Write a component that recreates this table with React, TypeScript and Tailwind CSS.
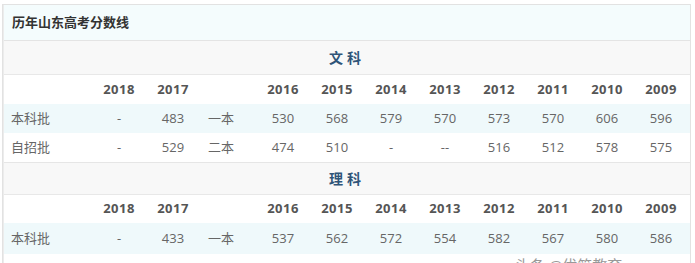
import React from 'react';

type Row = { label: string; values: string[]; batch: string };

const years = ['2018', '2017', '', '2016', '2015', '2014', '2013', '2012', '2011', '2010', '2009'];

const wenRows: Row[] = [
  { label: '本科批', batch: '一本', values: ['-', '483', '530', '568', '579', '570', '573', '570', '606', '596'] },
  { label: '自招批', batch: '二本', values: ['-', '529', '474', '510', '-', '--', '516', '512', '578', '575'] },
];

const liRows: Row[] = [
  { label: '本科批', batch: '一本', values: ['-', '433', '537', '562', '572', '554', '582', '567', '580', '586'] },
];

const cols = 'grid grid-cols-[88px_54px_54px_56px_54px_54px_54px_54px_54px_54px_54px_54px] items-center';

const YearRow: React.FC<{ h: string }> = ({ h }) => (
  <div className={`${cols} ${h} bg-white text-[13px] font-bold text-[#555] tracking-[0.5px]`}>
    <div />
    {years.map((y, i) => (
      <div key={i} className="text-center">{y}</div>
    ))}
  </div>
);

const DataRow: React.FC<{ row: Row; bg: string; h: string }> = ({ row, bg, h }) => (
  <div className={`${cols} ${h} ${bg} text-[13px] text-[#666]`}>
    <div className="pl-[7px]">{row.label}</div>
    <div className="text-center">{row.values[0]}</div>
    <div className="text-center">{row.values[1]}</div>
    <div className="pl-[8px]">{row.batch}</div>
    {row.values.slice(2).map((v, i) => (
      <div key={i} className="text-center">{v}</div>
    ))}
  </div>
);

const Section: React.FC<{ title: string; h: string }> = ({ title, h }) => (
  <div className={`flex ${h} items-center justify-center border-b border-[#e8e8e8] bg-[#f8f8f8] text-[14px] font-bold text-[#2f5478] tracking-[4px]`}>
    {title}
  </div>
);

export default function App() {
  return (
    <div
      className="relative h-[263px] w-[695px] overflow-hidden bg-white pl-[2px] pt-[4px]"
      style={{ fontFamily: '"Open Sans", "Noto Sans CJK SC", sans-serif' }}
    >
      <div className="w-[689px] border border-[#e2e2e2]">
        <div className="border-l border-[#ececec]">
          <div className="flex h-[36px] items-center border-b border-[#e4e4e4] bg-[#f4fcfd] pl-[8px] text-[13px] font-bold text-[#333]">
            历年山东高考分数线
          </div>
          <Section title="文科" h="h-[34px]" />
          <YearRow h="h-[29px]" />
          <DataRow row={wenRows[0]} bg="bg-[#eff9fb]" h="h-[29px]" />
          <DataRow row={wenRows[1]} bg="bg-white" h="h-[29px]" />
          <div className="border-t border-[#e6e6e6]" />
          <Section title="理科" h="h-[32px]" />
          <YearRow h="h-[28px]" />
          <DataRow row={liRows[0]} bg="bg-[#eff9fb]" h="h-[31px]" />
          <div className="h-[20px] bg-white" />
        </div>
      </div>
      <div className="absolute left-[515px] top-[254px] text-[15px] text-[#999]">头条 @优简教育</div>
    </div>
  );
}
